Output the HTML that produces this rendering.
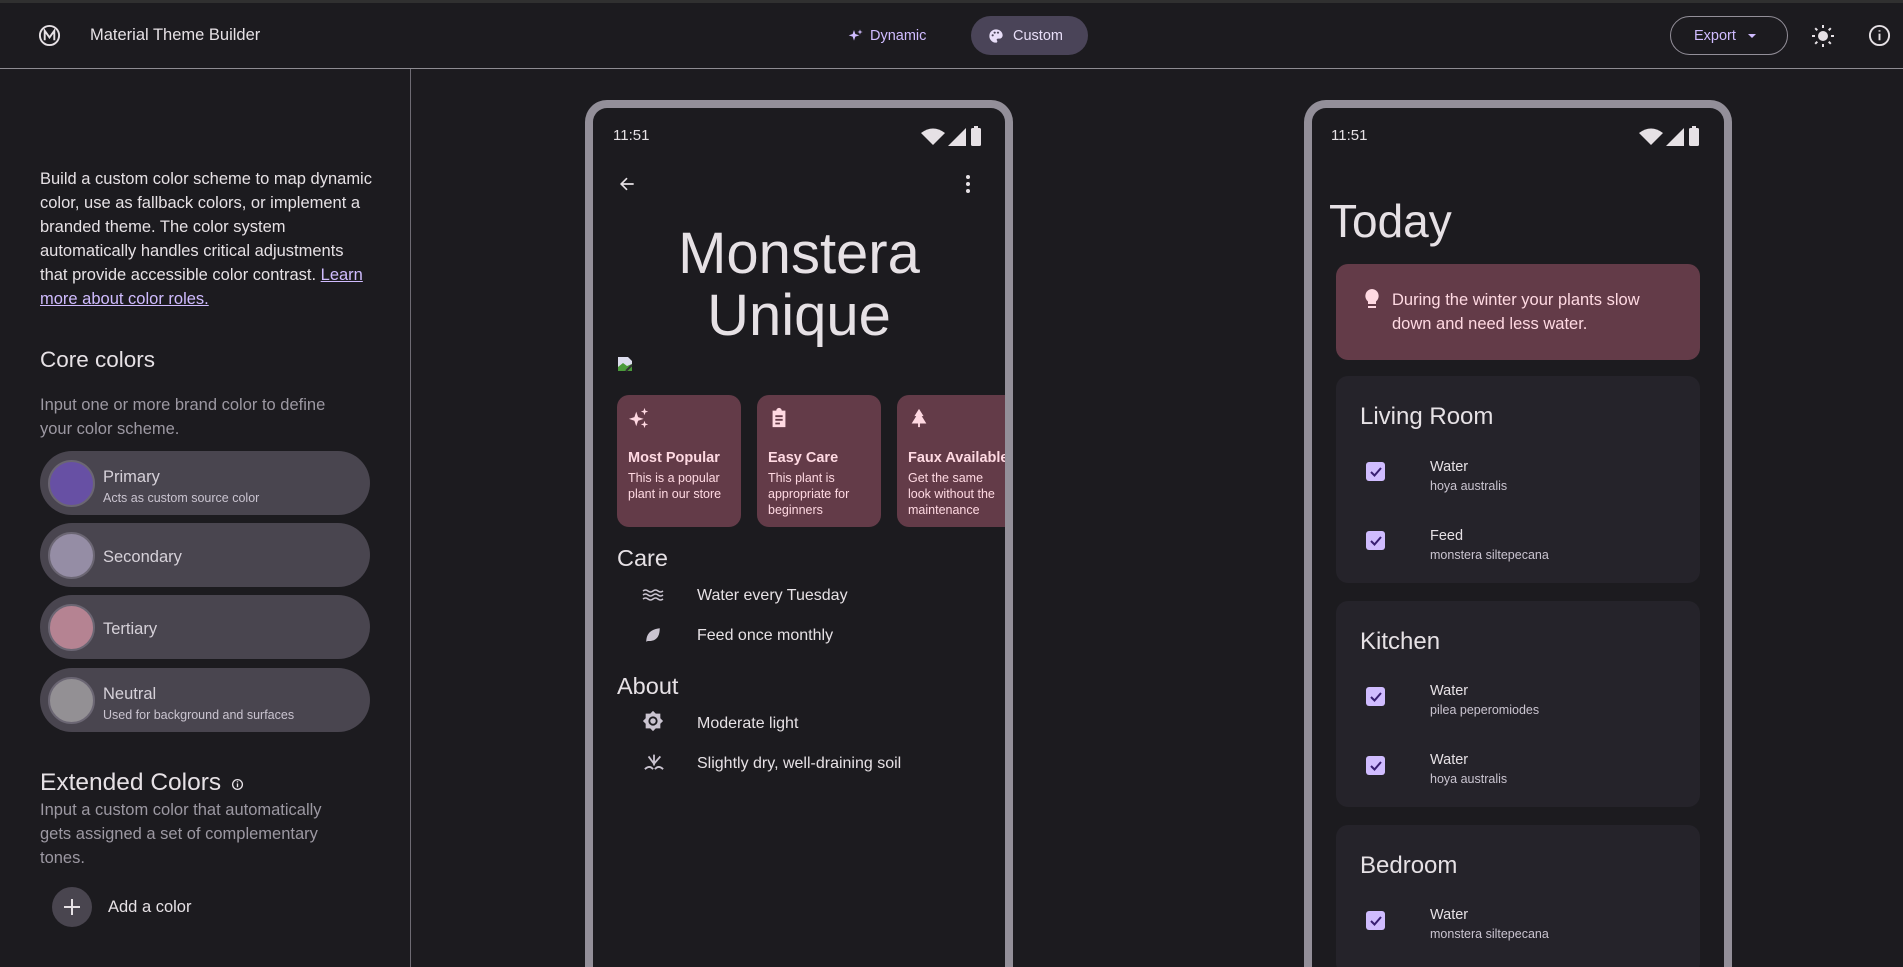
<!DOCTYPE html>
<html style="width:1903px;height:967px;overflow:hidden"><head><meta charset="utf-8"><style>
*{margin:0;padding:0;box-sizing:border-box}
body{width:1903px;height:967px;overflow:hidden;background:#1c1b1f;font-family:"Liberation Sans",sans-serif;color:#e6e1e5;position:relative}
.a{position:absolute;white-space:nowrap}
.row{position:absolute;left:40px;width:330px;height:64px;border-radius:32px;background:#49454f}
.row .c{position:absolute;left:8px;top:9px;width:47px;height:47px;border-radius:50%;border:2px solid #6b6673}
.row .t{position:absolute;left:63px;font-size:16.5px;color:#d6d1d9}
.row .s{position:absolute;left:63px;font-size:12.5px;color:#cac4d0}
.phone{position:absolute;top:100px;width:428px;height:867px;border:8px solid #938f99;border-bottom:0;border-radius:22px 22px 0 0;background:#1c1b1f;overflow:hidden}
.card{position:absolute;top:287px;width:124px;height:132px;border-radius:12px;background:#633b48;color:#ffd9e2}
.card b{position:absolute;left:11px;top:55px;font-size:14.5px;font-weight:bold;white-space:nowrap}
.card p{position:absolute;left:11px;top:75px;font-size:12.5px;line-height:16px;white-space:nowrap}
.box{position:absolute;left:24px;width:364px;border-radius:12px;background:#25232a}
.box h3{position:absolute;left:24px;font-weight:normal;font-size:24px}
.cb{position:absolute;left:30px;width:19px;height:19px;border-radius:3px;background:#d0bcff}
.it{position:absolute;left:94px;font-size:14.5px;color:#e6e1e5}
.sub{position:absolute;left:94px;font-size:12.5px;color:#cac4d0}
#clip{position:absolute;left:0;top:0;width:1903px;height:967px;overflow:hidden}
</style></head><body><div id="clip">
<div class="a" style="left:0;top:0;width:1903px;height:3px;background:#303030"></div>
<div class="a" style="left:0;top:68px;width:1903px;height:1px;background:#8e8c92"></div>
<div class="a" style="left:410px;top:69px;width:1px;height:898px;background:#6e6b73"></div>
<!-- header -->
<svg class="a" style="left:38px;top:24px" width="23" height="23" viewBox="0 0 24 24"><circle cx="12" cy="12" r="10" fill="none" stroke="#e6e1e5" stroke-width="2"/><path d="M7 17V7l5 7 5-7v10" fill="none" stroke="#e6e1e5" stroke-width="2"/></svg>
<div class="a" style="left:90px;top:26px;font-size:16.5px;color:#e6e1e5">Material Theme Builder</div>
<svg class="a" style="left:848px;top:28px" width="16" height="16" viewBox="0 0 24 24"><path d="M9 3l2 6 6 2-6 2-2 6-2-6-6-2 6-2zM18 2l1 3 3 1-3 1-1 3-1-3-3-1 3-1z" fill="#d0bcff"/></svg>
<div class="a" style="left:870px;top:28px;font-size:14.5px;color:#d0bcff">Dynamic</div>
<div class="a" style="left:971px;top:16px;width:117px;height:39px;border-radius:20px;background:#4a4458"></div>
<svg class="a" style="left:988px;top:28px" width="16" height="16" viewBox="0 0 24 24"><path d="M12 2a10 10 0 000 20c1.5 0 2-1 2-2 0-1-1-1.5-1-2.5S14 16 15 16h2a5 5 0 005-5c0-5-4.5-9-10-9z" fill="#e8def8"/><circle cx="7" cy="11" r="1.6" fill="#4a4458"/><circle cx="10" cy="7" r="1.6" fill="#4a4458"/><circle cx="15" cy="7" r="1.6" fill="#4a4458"/></svg>
<div class="a" style="left:1013px;top:28px;font-size:14.5px;color:#e8def8">Custom</div>
<div class="a" style="left:1670px;top:16px;width:118px;height:39px;border-radius:20px;border:1px solid #938f99"></div>
<div class="a" style="left:1694px;top:28px;font-size:14.5px;color:#d0bcff">Export</div>
<div class="a" style="left:1748px;top:34px;width:0;height:0;border-left:4px solid transparent;border-right:4px solid transparent;border-top:4px solid #d0bcff"></div>
<svg class="a" style="left:1811px;top:24px" width="24" height="24" viewBox="0 0 24 24"><circle cx="12" cy="12" r="5" fill="#e6e1e5"/><g stroke="#e6e1e5" stroke-width="2"><path d="M12 1v3M12 20v3M1 12h3M20 12h3M4.2 4.2l2.1 2.1M17.7 17.7l2.1 2.1M4.2 19.8l2.1-2.1M17.7 6.3l2.1-2.1"/></g></svg>
<svg class="a" style="left:1868px;top:24px" width="23" height="23" viewBox="0 0 24 24"><circle cx="12" cy="12" r="10" fill="none" stroke="#e6e1e5" stroke-width="2"/><path d="M12 10v7M12 6.5v1.5" stroke="#e6e1e5" stroke-width="2"/></svg>
<!-- sidebar -->
<div class="a" style="left:40px;top:167px;font-size:16.5px;line-height:24px;color:#e6e1e5">Build a custom color scheme to map dynamic<br>color, use as fallback colors, or implement a<br>branded theme. The color system<br>automatically handles critical adjustments<br>that provide accessible color contrast. <span style="color:#d0bcff;text-decoration:underline">Learn</span><br><span style="color:#d0bcff;text-decoration:underline">more about color roles.</span></div>
<div class="a" style="left:40px;top:348px;font-size:22.5px;line-height:24px">Core colors</div>
<div class="a" style="left:40px;top:393px;font-size:16.5px;line-height:24px;color:#9c98a2">Input one or more brand color to define<br>your color scheme.</div>
<div class="row" style="top:451px"><div class="c" style="background:#6750a4"></div><div class="t" style="top:17px">Primary</div><div class="s" style="top:40px">Acts as custom source color</div></div>
<div class="row" style="top:523px"><div class="c" style="background:#958da5"></div><div class="t" style="top:25px">Secondary</div></div>
<div class="row" style="top:595px"><div class="c" style="background:#b58392"></div><div class="t" style="top:25px">Tertiary</div></div>
<div class="row" style="top:668px"><div class="c" style="background:#939094"></div><div class="t" style="top:17px">Neutral</div><div class="s" style="top:40px">Used for background and surfaces</div></div>
<div class="a" style="left:40px;top:769px;font-size:24.5px">Extended Colors</div>
<svg class="a" style="left:231px;top:778px" width="13" height="13" viewBox="0 0 24 24"><circle cx="12" cy="12" r="9" fill="none" stroke="#e6e1e5" stroke-width="2.5"/><path d="M12 10v7M12 6v2" stroke="#e6e1e5" stroke-width="2.5"/></svg>
<div class="a" style="left:40px;top:798px;font-size:16.5px;line-height:24px;color:#9c98a2">Input a custom color that automatically<br>gets assigned a set of complementary<br>tones.</div>
<div class="a" style="left:52px;top:887px;width:40px;height:40px;border-radius:50%;background:#49454f"></div>
<div class="a" style="left:64px;top:906px;width:16px;height:2px;background:#e6e1e5"></div>
<div class="a" style="left:71px;top:899px;width:2px;height:16px;background:#e6e1e5"></div>
<div class="a" style="left:108px;top:898px;font-size:16.5px">Add a color</div>
<!-- phone 1 -->
<div class="phone" style="left:585px">
<div class="a" style="left:20px;top:19px;font-size:15px">11:51</div>
<svg class="a" style="left:328px;top:18px" width="70" height="20" viewBox="0 0 70 20"><path d="M0 7q12-9 24 0l-12 12z" fill="#e6e1e5"/><path d="M27 20l18-18v18z" fill="#e6e1e5"/><rect x="50" y="2" width="10" height="18" rx="1.5" fill="#e6e1e5"/><rect x="53" y="0" width="4" height="3" fill="#e6e1e5"/></svg>
<svg class="a" style="left:24px;top:66px" width="20" height="20" viewBox="0 0 24 24"><path d="M20 12H5M12 5l-7 7 7 7" fill="none" stroke="#e6e1e5" stroke-width="2"/></svg>
<svg class="a" style="left:372px;top:66px" width="6" height="20" viewBox="0 0 6 20"><circle cx="3" cy="3" r="2" fill="#e6e1e5"/><circle cx="3" cy="10" r="2" fill="#e6e1e5"/><circle cx="3" cy="17" r="2" fill="#e6e1e5"/></svg>
<div class="a" style="left:0;width:412px;top:115px;text-align:center;font-size:58px;line-height:62px">Monstera<br>Unique</div>
<svg class="a" style="left:24px;top:248px" width="16" height="16" viewBox="0 0 16 16"><path d="M1 1h10l4 4v10H1z" fill="#dde"/><path d="M1 11l5-4 4 3 5-2v7H1z" fill="#4a9a3a"/><path d="M9 15l6-6" stroke="#333" stroke-width="2"/></svg>
<div class="card" style="left:24px"><svg class="a" style="left:11px;top:12px" width="22" height="22" viewBox="0 0 24 24"><path d="M9 5l2 6 6 2-6 2-2 6-2-6-6-2 6-2zM18 1l1 3 3 1-3 1-1 3-1-3-3-1 3-1zM18 15l1 3 3 1-3 1-1 3-1-3-3-1 3-1z" fill="#ffd9e2"/></svg><b>Most Popular</b><p>This is a popular<br>plant in our store</p></div>
<div class="card" style="left:164px"><svg class="a" style="left:11px;top:12px" width="22" height="22" viewBox="0 0 24 24"><path d="M5 4h4a3 3 0 016 0h4v18H5z" fill="#ffd9e2"/><path d="M8 10h8M8 14h8M8 18h5" stroke="#633b48" stroke-width="2"/></svg><b>Easy Care</b><p>This plant is<br>appropriate for<br>beginners</p></div>
<div class="card" style="left:304px"><svg class="a" style="left:11px;top:12px" width="22" height="22" viewBox="0 0 24 24"><path d="M12 2l5 8h-2l5 8H4l5-8H7zM11 18h2v4h-2z" fill="#ffd9e2"/></svg><b>Faux Available</b><p>Get the same<br>look without the<br>maintenance</p></div>
<div class="a" style="left:24px;top:437px;font-size:23.5px">Care</div>
<svg class="a" style="left:49px;top:480px" width="22" height="14" viewBox="0 0 22 14"><path d="M1 3q2.5-2 5 0t5 0 5 0 5 0M1 7q2.5-2 5 0t5 0 5 0 5 0M1 11q2.5-2 5 0t5 0 5 0 5 0" fill="none" stroke="#cac4d0" stroke-width="1.5"/></svg>
<div class="a" style="left:104px;top:479px;font-size:16px">Water every Tuesday</div>
<svg class="a" style="left:51px;top:518px" width="18" height="18" viewBox="0 0 24 24"><path d="M3 21q0-16 18-18 0 18-16 17z" fill="#cac4d0"/></svg>
<div class="a" style="left:104px;top:519px;font-size:16px">Feed once monthly</div>
<div class="a" style="left:24px;top:565px;font-size:23.5px">About</div>
<svg class="a" style="left:49px;top:602px" width="22" height="22" viewBox="0 0 24 24"><path d="M12 1l3 3h5v5l3 3-3 3v5h-5l-3 3-3-3H4v-5l-3-3 3-3V4h5z" fill="#cac4d0"/><circle cx="12" cy="12" r="5" fill="#1c1b1f"/><circle cx="12" cy="12" r="3" fill="#cac4d0"/></svg>
<div class="a" style="left:104px;top:607px;font-size:16px">Moderate light</div>
<svg class="a" style="left:50px;top:643px" width="22" height="20" viewBox="0 0 24 22"><path d="M2 20q5-5 9 0M13 20q4-5 9 0M12 16V4M12 14l-6-8M12 14l7-8" fill="none" stroke="#cac4d0" stroke-width="2"/></svg>
<div class="a" style="left:104px;top:647px;font-size:16px">Slightly dry, well-draining soil</div>
</div>
<!-- phone 2 -->
<div class="phone" style="left:1304px">
<div class="a" style="left:19px;top:19px;font-size:15px">11:51</div>
<svg class="a" style="left:327px;top:18px" width="70" height="20" viewBox="0 0 70 20"><path d="M0 7q12-9 24 0l-12 12z" fill="#e6e1e5"/><path d="M27 20l18-18v18z" fill="#e6e1e5"/><rect x="50" y="2" width="10" height="18" rx="1.5" fill="#e6e1e5"/><rect x="53" y="0" width="4" height="3" fill="#e6e1e5"/></svg>
<div class="a" style="left:17px;top:86px;font-size:46px">Today</div>
<div class="a" style="left:24px;top:156px;width:364px;height:96px;border-radius:12px;background:#633b48"></div>
<svg class="a" style="left:52px;top:180px" width="16" height="22" viewBox="0 0 16 22"><path d="M8 1a7 7 0 00-4 12.5V16h8v-2.5A7 7 0 008 1z" fill="#ffd9e2"/><rect x="4" y="18" width="8" height="2" fill="#ffd9e2"/></svg>
<div class="a" style="left:80px;top:180px;font-size:16.5px;line-height:24px;color:#ffd9e2">During the winter your plants slow<br>down and need less water.</div>
<div class="box" style="top:268px;height:207px"><h3 style="top:27px">Living Room</h3>
<div class="cb" style="top:86px"></div><svg class="a" style="left:33px;top:89px" width="14" height="14" viewBox="0 0 14 14"><path d="M2 7l3.5 3.5L12 3" fill="none" stroke="#381e72" stroke-width="2"/></svg>
<div class="it" style="top:83px">Water</div><div class="sub" style="top:103px">hoya australis</div>
<div class="cb" style="top:155px"></div><svg class="a" style="left:33px;top:158px" width="14" height="14" viewBox="0 0 14 14"><path d="M2 7l3.5 3.5L12 3" fill="none" stroke="#381e72" stroke-width="2"/></svg>
<div class="it" style="top:152px">Feed</div><div class="sub" style="top:172px">monstera siltepecana</div></div>
<div class="box" style="top:493px;height:206px"><h3 style="top:27px">Kitchen</h3>
<div class="cb" style="top:86px"></div><svg class="a" style="left:33px;top:89px" width="14" height="14" viewBox="0 0 14 14"><path d="M2 7l3.5 3.5L12 3" fill="none" stroke="#381e72" stroke-width="2"/></svg>
<div class="it" style="top:82px">Water</div><div class="sub" style="top:102px">pilea peperomiodes</div>
<div class="cb" style="top:155px"></div><svg class="a" style="left:33px;top:158px" width="14" height="14" viewBox="0 0 14 14"><path d="M2 7l3.5 3.5L12 3" fill="none" stroke="#381e72" stroke-width="2"/></svg>
<div class="it" style="top:151px">Water</div><div class="sub" style="top:171px">hoya australis</div></div>
<div class="box" style="top:717px;height:150px"><h3 style="top:27px">Bedroom</h3>
<div class="cb" style="top:86px"></div><svg class="a" style="left:33px;top:89px" width="14" height="14" viewBox="0 0 14 14"><path d="M2 7l3.5 3.5L12 3" fill="none" stroke="#381e72" stroke-width="2"/></svg>
<div class="it" style="top:82px">Water</div><div class="sub" style="top:102px">monstera siltepecana</div></div>
</div>
</div></body></html>
